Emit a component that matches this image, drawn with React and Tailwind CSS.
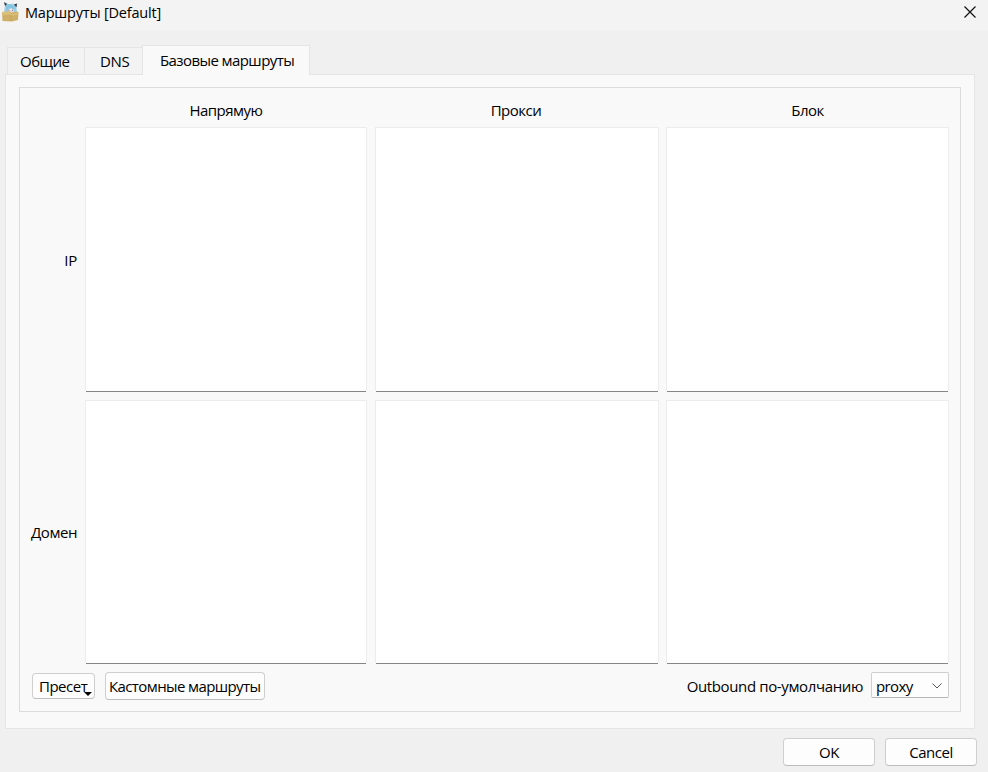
function Label({ children, className = '' }) {
  return <span className={`block whitespace-nowrap leading-[18px] ${className}`}>{children}</span>;
}

function TextArea() {
  return (
    <div className="flex flex-col">
      <div className="flex-1 border border-b-0 border-[#ececec] bg-white" />
      <div className="mx-px h-px bg-[#868686]" />
    </div>
  );
}

function AppIcon() {
  return (
    <svg className="mt-[2px] ml-[2px] h-[20px] w-[17px] shrink-0" viewBox="0 0 17 20">
      <path d="M3 3 2 11h13l-.5-5-1.500-3-2-1.500-2 .5H6L4 .5z" fill="#9bcfe5" />
      <path d="m2 0 3 2-2 2zM15 1.500l-.5 4-2.500-3z" fill="#34303f" />
      <path d="M6 6h5l1 3-1 2H6L5 9z" fill="#e9dce1" />
      <path d="M4 3 8 2l5 3-1 3-3-2-2 1-2 3z" fill="#85c5df" />
      <path d="M6.500 8.500h1M10 8.500h1" stroke="#62708c" strokeWidth=".8" />
      <path d="m0 10 8-.5 1 1 6-1 1.500 1-.5 7.500-6 1.500-9.500-.5z" fill="#cfb069" />
      <path d="m0 10 8-.5 1 2.500 6.500-1 1 1-6.500 1.500-1.500-1-8 .5z" fill="#dbc079" />
      <path d="m9 13-.3 6" stroke="#b99a57" strokeWidth=".6" fill="none" />
    </svg>
  );
}

export default function App() {
  return (
    <div className="flex h-[772px] w-[988px] flex-col overflow-hidden bg-[#f0f0f0] font-['Open_Sans','Noto_Sans',sans-serif] text-[15px] text-black">
      <header className="flex h-[31px] shrink-0 bg-[#f3f3f3]">
        <AppIcon />
        <Label className="mt-[4px] ml-[6px] text-[14.5px] tracking-[-0.2px]">Маршруты [Default]</Label>
        <svg className="mt-[6px] mr-[12px] ml-auto size-[12px]" viewBox="0 0 12 12">
          <path d="m.5.5 11 11m0-11-11 11" stroke="#111" strokeWidth="1.2" />
        </svg>
      </header>

      <nav className="z-10 mt-[14px] -mb-px ml-[7px] flex h-[30px] shrink-0 items-end">
        <div className="flex h-[28px] w-[77px] border border-r-0 border-[#e5e5e5] bg-[#f3f3f3] pt-[4px] pl-[12px]">
          <Label className="tracking-[-0.5px]">Общие</Label>
        </div>
        <div className="flex h-[28px] w-[58px] border border-r-0 border-[#e5e5e5] bg-[#f3f3f3] pt-[4px] pl-[15px]">
          <Label className="tracking-[-0.3px]">DNS</Label>
        </div>
        <div className="flex h-[30px] w-[168px] border border-b-0 border-[#e5e5e5] bg-[#f9f9f9] pt-[5px] pl-[17px]">
          <Label className="tracking-[-0.58px]">Базовые маршруты</Label>
        </div>
      </nav>

      <main className="ml-[5px] h-[655px] w-[970px] shrink-0 border border-[#e5e5e5] bg-[#f9f9f9] pt-[12px] pl-[13px]">
        <section className="flex h-[625px] w-[942px] flex-col border border-[#dcdcdc]">
          <div className="grid h-[577px] shrink-0 grid-cols-[57px_282px_284px_283px] grid-rows-[39px_265px_8px_264px] gap-x-[8px]">
            <div />
            <Label className="mt-[13px] text-center tracking-[-0.5px]">Напрямую</Label>
            <Label className="mt-[13px] -ml-[2px] text-center tracking-[-0.5px]">Прокси</Label>
            <Label className="mt-[13px] -ml-[2px] text-center tracking-[-0.5px]">Блок</Label>
            <Label className="self-center text-right tracking-[-0.2px]">IP</Label>
            <TextArea />
            <TextArea />
            <div className="-ml-px mr-px grid"><TextArea /></div>
            <div className="col-span-4" />
            <Label className="self-center text-right tracking-[-0.45px]">Домен</Label>
            <TextArea />
            <TextArea />
            <div className="-ml-px mr-px grid"><TextArea /></div>
          </div>
          <div className="mt-[7px] flex pl-[12px]">
            <button className="mt-[1px] flex h-[26px] w-[63px] rounded-[4px] border border-[#cfcfcf] border-b-[#bdbdbd] bg-[#fdfdfd] pt-[3px] pl-[6px]">
              <Label className="tracking-[-0.5px]">Пресет</Label>
              <svg className="mt-[15px] -ml-[3px] h-[4px] w-[8px] shrink-0" viewBox="0 0 8 4">
                <path d="M0 0h8L4 4z" />
              </svg>
            </button>
            <button className="ml-[10px] flex h-[28px] w-[160px] rounded-[4px] border border-[#cfcfcf] border-b-[#bdbdbd] bg-[#fdfdfd] pt-[4px] pl-[3px]">
              <Label className="tracking-[-0.6px]">Кастомные маршруты</Label>
            </button>
            <Label className="mt-[5px] ml-auto tracking-[-0.37px]">Outbound по-умолчанию</Label>
            <div className="mr-[11px] ml-[8px] flex h-[26px] w-[78px] rounded-[2px] border border-[#cfcfcf] border-b-[#b5b5b5] bg-[#fdfdfd] pt-[4px] pl-[4px]">
              <Label className="tracking-[-0.6px]">proxy</Label>
              <svg className="mt-[6px] mr-[6px] ml-auto h-[6px] w-[10px]" viewBox="0 0 10 6">
                <path d="m.5.5 4.500 4.500 4.500-4.500" stroke="#555" fill="none" />
              </svg>
            </div>
          </div>
        </section>
      </main>

      <footer className="mt-[9px] mr-[11px] flex justify-end gap-[10px]">
        <button className="h-[28px] w-[92px] rounded-[4px] border border-[#cfcfcf] border-b-[#bdbdbd] bg-[#fdfdfd]"><Label className="tracking-[-0.5px]">OK</Label></button>
        <button className="h-[28px] w-[92px] rounded-[4px] border border-[#cfcfcf] border-b-[#bdbdbd] bg-[#fdfdfd]"><Label className="tracking-[-0.45px]">Cancel</Label></button>
      </footer>
    </div>
  );
}
